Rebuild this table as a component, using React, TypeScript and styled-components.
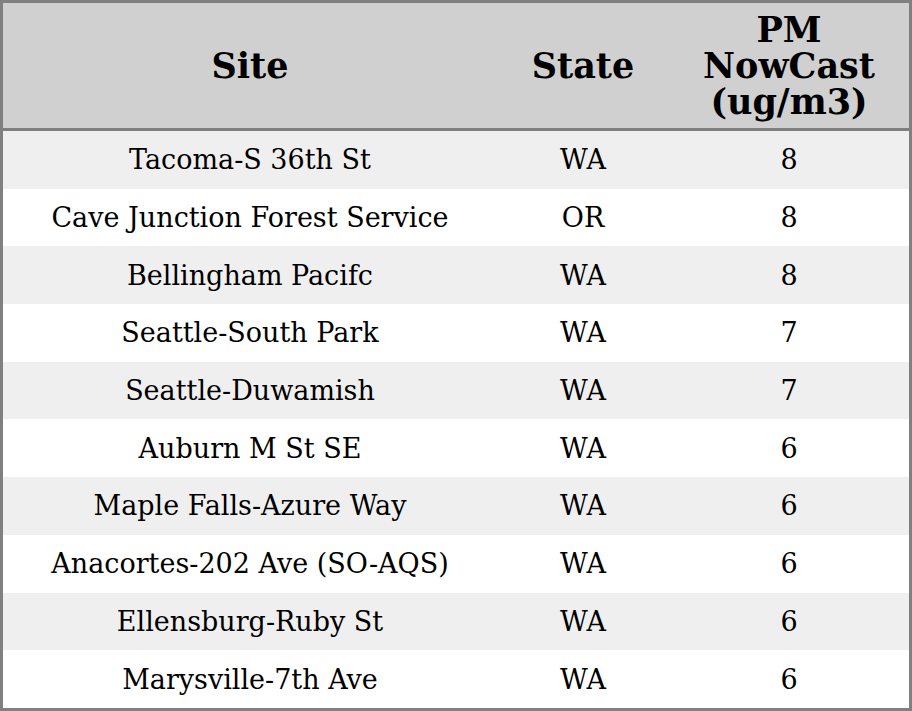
import styled, { createGlobalStyle } from 'styled-components';

const GlobalStyle = createGlobalStyle`
  html, body {
    margin: 0;
    padding: 0;
    background: #ffffff;
  }
`;

// 표 전체
const Table = styled.table`
  width: 912px;
  height: 711px;
  box-sizing: border-box;
  border: 3px solid #808080;
  border-collapse: separate;
  border-spacing: 0;
  table-layout: fixed;
  font-family: 'DejaVu Serif', 'Liberation Serif', serif;
  color: #000000;
`;

const HeadCell = styled.th<{ $width: number }>`
  width: ${(p) => p.$width}px;
  height: 125px;
  padding: 0;
  background: #d0d0d0;
  border-bottom: 3px solid #808080;
  font-size: 35px;
  font-weight: bold;
  line-height: 36px;
  text-align: center;
  vertical-align: middle;
`;

const Row = styled.tr<{ $striped: boolean }>`
  background: ${(p) => (p.$striped ? '#efefef' : '#ffffff')};
`;

const Cell = styled.td`
  padding: 0;
  font-size: 27px;
  text-align: center;
  vertical-align: middle;
`;

type Reading = {
  site: string;
  state: string;
  pm: number;
};

const readings: Reading[] = [
  { site: 'Tacoma-S 36th St', state: 'WA', pm: 8 },
  { site: 'Cave Junction Forest Service', state: 'OR', pm: 8 },
  { site: 'Bellingham Pacifc', state: 'WA', pm: 8 },
  { site: 'Seattle-South Park', state: 'WA', pm: 7 },
  { site: 'Seattle-Duwamish', state: 'WA', pm: 7 },
  { site: 'Auburn M St SE', state: 'WA', pm: 6 },
  { site: 'Maple Falls-Azure Way', state: 'WA', pm: 6 },
  { site: 'Anacortes-202 Ave (SO-AQS)', state: 'WA', pm: 6 },
  { site: 'Ellensburg-Ruby St', state: 'WA', pm: 6 },
  { site: 'Marysville-7th Ave', state: 'WA', pm: 6 },
];

const App: React.FC = () => {
  return (
    <>
      <GlobalStyle />
      <Table>
        <thead>
          <tr>
            <HeadCell $width={494}>Site</HeadCell>
            <HeadCell $width={172}>State</HeadCell>
            <HeadCell $width={240}>
              PM
              <br />
              NowCast
              <br />
              (ug/m3)
            </HeadCell>
          </tr>
        </thead>
        <tbody>
          {readings.map((r, i) => (
            <Row key={r.site} $striped={i % 2 === 0}>
              <Cell>{r.site}</Cell>
              <Cell>{r.state}</Cell>
              <Cell>{r.pm}</Cell>
            </Row>
          ))}
        </tbody>
      </Table>
    </>
  );
};

export default App;
